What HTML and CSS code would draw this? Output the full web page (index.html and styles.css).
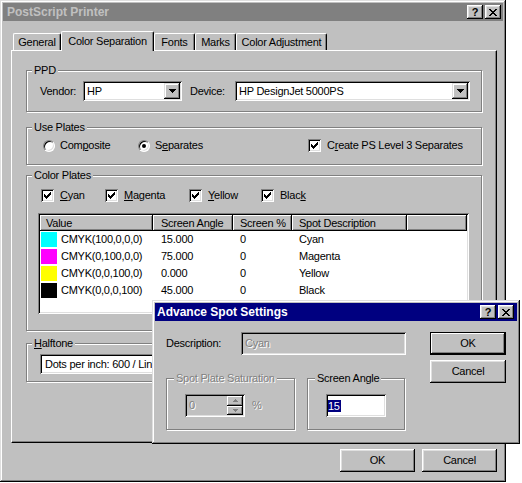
FILE: index.html
```html
<!DOCTYPE html>
<html lang="en">
<head>
<meta charset="utf-8">
<title>PostScript Printer</title>
<link rel="stylesheet" href="styles.css">
</head>
<body>
<div class="desktop">
  <div class="window">
    <div class="titlebar inactive">
      <span class="title">PostScript Printer</span>
      <div class="capbtns">
        <span class="capbtn">?</span>
        <span class="capbtn"><svg class="px" width="8" height="7" viewBox="0 0 8 7"><path d="M0 0h2v1H0zM6 0h2v1H6zM1 1h2v1H1zM5 1h2v1H5zM2 2h4v1H2zM3 3h2v1H3zM2 4h4v1H2zM1 5h2v1H1zM5 5h2v1H5zM0 6h2v1H0zM6 6h2v1H6z"/></svg></span>
      </div>
    </div>

    <div class="tabs">
      <div class="tab w-general">General</div>
      <div class="tab sel w-colorsep">Color Separation</div>
      <div class="tab w-fonts">Fonts</div>
      <div class="tab w-marks">Marks</div>
      <div class="tab w-coladj">Color Adjustment</div>
    </div>

    <div class="page">
      <fieldset class="group g-ppd">
        <legend>PPD</legend>
        <div class="ppd-row">
          <span class="vendor-lbl">Vendor:</span>
          <div class="field combo vendor-combo">
            <span class="combo-text">HP</span>
            <span class="dropbtn"><svg class="px" width="7" height="4" viewBox="0 0 7 4"><path d="M0 0h7v1H0zM1 1h5v1H1zM2 2h3v1H2zM3 3h1v1H3z"/></svg></span>
          </div>
          <span class="device-lbl">Device:</span>
          <div class="field combo device-combo">
            <span class="combo-text">HP DesignJet 5000PS</span>
            <span class="dropbtn"><svg class="px" width="7" height="4" viewBox="0 0 7 4"><path d="M0 0h7v1H0zM1 1h5v1H1zM2 2h3v1H2zM3 3h1v1H3z"/></svg></span>
          </div>
        </div>
      </fieldset>

      <fieldset class="group g-plates">
        <legend>Use Plates</legend>
        <div class="plates-row">
          <span class="opt radio-opt w-composite"><span class="radio"></span><span class="txt">Com<u>p</u>osite</span></span>
          <span class="opt radio-opt w-separates"><span class="radio"><span class="dot"></span></span><span class="txt">S<u>e</u>parates</span></span>
          <span class="opt"><span class="check"><svg class="px" width="7" height="7" viewBox="0 0 7 7"><path d="M6 0h1v1H6zM5 1h2v1H5zM0 2h1v1H0zM4 2h3v1H4zM0 3h2v1H0zM3 3h3v1H3zM0 4h5v1H0zM1 5h3v1H1zM2 6h1v1H2z"/></svg></span><span class="txt">C<u>r</u>eate PS Level 3 Separates</span></span>
        </div>
      </fieldset>

      <fieldset class="group g-colors">
        <legend>Color Plates</legend>
        <div class="cp-inner">
          <div class="cp-checks">
            <span class="opt w-cyan"><span class="check"><svg class="px" width="7" height="7" viewBox="0 0 7 7"><path d="M6 0h1v1H6zM5 1h2v1H5zM0 2h1v1H0zM4 2h3v1H4zM0 3h2v1H0zM3 3h3v1H3zM0 4h5v1H0zM1 5h3v1H1zM2 6h1v1H2z"/></svg></span><span class="txt"><u>C</u>yan</span></span>
            <span class="opt w-magenta"><span class="check"><svg class="px" width="7" height="7" viewBox="0 0 7 7"><path d="M6 0h1v1H6zM5 1h2v1H5zM0 2h1v1H0zM4 2h3v1H4zM0 3h2v1H0zM3 3h3v1H3zM0 4h5v1H0zM1 5h3v1H1zM2 6h1v1H2z"/></svg></span><span class="txt"><u>M</u>agenta</span></span>
            <span class="opt w-yellow"><span class="check"><svg class="px" width="7" height="7" viewBox="0 0 7 7"><path d="M6 0h1v1H6zM5 1h2v1H5zM0 2h1v1H0zM4 2h3v1H4zM0 3h2v1H0zM3 3h3v1H3zM0 4h5v1H0zM1 5h3v1H1zM2 6h1v1H2z"/></svg></span><span class="txt"><u>Y</u>ellow</span></span>
            <span class="opt"><span class="check"><svg class="px" width="7" height="7" viewBox="0 0 7 7"><path d="M6 0h1v1H6zM5 1h2v1H5zM0 2h1v1H0zM4 2h3v1H4zM0 3h2v1H0zM3 3h3v1H3zM0 4h5v1H0zM1 5h3v1H1zM2 6h1v1H2z"/></svg></span><span class="txt">Blac<u>k</u></span></span>
          </div>
          <div class="field list">
            <div class="lv-head">
              <span class="hcell c-value">Value</span>
              <span class="hcell c-angle">Screen Angle</span>
              <span class="hcell c-pct">Screen %</span>
              <span class="hcell c-desc">Spot Description</span>
              <span class="hcell c-fill"></span>
            </div>
            <div class="lv-row">
              <span class="cell c-value"><span class="swatch sw-cyan"></span><span class="txt">CMYK(100,0,0,0)</span></span>
              <span class="cell c-angle">15.000</span>
              <span class="cell c-pct">0</span>
              <span class="cell c-desc">Cyan</span>
            </div>
            <div class="lv-row">
              <span class="cell c-value"><span class="swatch sw-magenta"></span><span class="txt">CMYK(0,100,0,0)</span></span>
              <span class="cell c-angle">75.000</span>
              <span class="cell c-pct">0</span>
              <span class="cell c-desc">Magenta</span>
            </div>
            <div class="lv-row">
              <span class="cell c-value"><span class="swatch sw-yellow"></span><span class="txt">CMYK(0,0,100,0)</span></span>
              <span class="cell c-angle">0.000</span>
              <span class="cell c-pct">0</span>
              <span class="cell c-desc">Yellow</span>
            </div>
            <div class="lv-row">
              <span class="cell c-value"><span class="swatch sw-black"></span><span class="txt">CMYK(0,0,0,100)</span></span>
              <span class="cell c-angle">45.000</span>
              <span class="cell c-pct">0</span>
              <span class="cell c-desc">Black</span>
            </div>
          </div>
        </div>
      </fieldset>

      <fieldset class="group g-halftone">
        <legend><u>H</u>alftone</legend>
        <div class="ht-inner">
          <div class="field ht-field">Dots per inch: 600 / Lines per inch: 85</div>
        </div>
      </fieldset>
    </div>

    <div class="buttons">
      <div class="btn">OK</div>
      <div class="btn">Cancel</div>
    </div>
  </div>

  <div class="dialog">
    <div class="titlebar active">
      <span class="title">Advance Spot Settings</span>
      <div class="capbtns">
        <span class="capbtn">?</span>
        <span class="capbtn"><svg class="px" width="8" height="7" viewBox="0 0 8 7"><path d="M0 0h2v1H0zM6 0h2v1H6zM1 1h2v1H1zM5 1h2v1H5zM2 2h4v1H2zM3 3h2v1H3zM2 4h4v1H2zM1 5h2v1H1zM5 5h2v1H5zM0 6h2v1H0zM6 6h2v1H6z"/></svg></span>
      </div>
    </div>
    <div class="dlg-body">
      <div class="dlg-main">
        <div class="desc-row">
          <span class="desc-lbl">Description:</span>
          <div class="field disabled desc-field"><span class="dis-text">Cyan</span></div>
        </div>
        <div class="dlg-groups">
          <fieldset class="group dlg-group g-sat">
            <legend><span class="dis-text">Spot Plate Saturation</span></legend>
            <div class="sat-inner">
              <div class="field disabled spin">
                <span class="dis-text spin-val">0</span>
                <span class="spin-btns">
                  <span class="spin-btn"><svg class="px dis-arrow" width="5" height="3" viewBox="0 0 5 3"><path d="M2 0h1v1H2zM1 1h3v1H1zM0 2h5v1H0z"/></svg></span>
                  <span class="spin-btn"><svg class="px dis-arrow" width="5" height="3" viewBox="0 0 5 3"><path d="M0 0h5v1H0zM1 1h3v1H1zM2 2h1v1H2z"/></svg></span>
                </span>
              </div>
              <span class="dis-text pct">%</span>
            </div>
          </fieldset>
          <fieldset class="group dlg-group g-angle">
            <legend>Screen Angle</legend>
            <div class="angle-inner">
              <div class="field angle-field"><span class="sel-text">15</span></div>
            </div>
          </fieldset>
        </div>
      </div>
      <div class="dlg-btns">
        <div class="btn default">OK</div>
        <div class="btn">Cancel</div>
      </div>
    </div>
  </div>
</div>
</body>
</html>
```

FILE: styles.css
```css
* { box-sizing: border-box; }

html, body {
  margin: 0;
  padding: 0;
  background: #fff;
}

body {
  font-family: "Liberation Sans", Arial, sans-serif;
  font-size: 11px;
  line-height: 13px;
  letter-spacing: -0.25px;
  color: #000;
}

.desktop {
  position: relative;
  width: 522px;
  height: 483px;
  overflow: hidden;
}

.px {
  display: block;
  fill: #000;
  shape-rendering: crispEdges;
}

.txt { white-space: nowrap; }

/* ---------- window frame ---------- */
.window {
  width: 506px;
  height: 482px;
  padding: 3px;
  background: #c0c0c0;
  display: flex;
  flex-direction: column;
  box-shadow: inset -1px -1px 0 #000, inset 1px 1px 0 #dfdfdf,
              inset -2px -2px 0 #808080, inset 2px 2px 0 #fff;
}

.titlebar {
  flex: none;
  height: 18px;
  display: flex;
  align-items: center;
  justify-content: space-between;
  padding: 0 2px 0 4px;
  font-size: 12px;
  font-weight: bold;
  letter-spacing: 0;
  white-space: nowrap;
}
.titlebar.inactive { background: #808080; color: #c0c0c0; }
.titlebar.active { background: #000080; color: #fff; padding-left: 2px; }

.capbtns { display: flex; gap: 2px; }
.capbtn {
  width: 16px;
  height: 14px;
  background: #c0c0c0;
  color: #000;
  display: flex;
  align-items: center;
  justify-content: center;
  font-size: 11px;
  font-weight: bold;
  line-height: 14px;
  box-shadow: inset -1px -1px 0 #000, inset 1px 1px 0 #fff,
              inset -2px -2px 0 #808080, inset 2px 2px 0 #dfdfdf;
}

/* ---------- tabs ---------- */
.tabs {
  flex: none;
  display: flex;
  align-items: flex-end;
  height: 19px;
  margin: 10px 0 0 10px;
}
.tab {
  height: 17px;
  padding-top: 2px;
  text-align: center;
  white-space: nowrap;
  border-top: 1px solid #fff;
  border-left: 1px solid #fff;
  border-right: 1px solid #000;
  border-radius: 2px 2px 0 0;
  box-shadow: inset -1px 0 0 #808080;
}
.tab.sel {
  height: 20px;
  padding-top: 3px;
  margin-bottom: -1px;
  position: relative;
  z-index: 1;
  background: #c0c0c0;
}
.w-general { width: 48px; }
.w-colorsep { width: 93px; }
.w-fonts { width: 41px; }
.w-marks { width: 41px; }
.w-coladj { width: 91px; }

.page {
  flex: none;
  height: 393px;
  margin: 0 6px 0 8px;
  padding: 13px 14px 0;
  border: 1px solid;
  border-color: #fff #000 #000 #fff;
  box-shadow: inset -1px -1px 0 #808080;
  display: flex;
  flex-direction: column;
}

/* ---------- group boxes ---------- */
.group {
  flex: none;
  margin: 0;
  padding: 0;
  min-width: 0;
  border: 1px solid #808080;
  box-shadow: 1px 1px 0 #fff, inset 1px 1px 0 #fff;
}
.group > legend {
  margin-left: 5px;
  padding: 0 2px;
  height: 13px;
  line-height: 13px;
  background: #c0c0c0;
  white-space: nowrap;
}
.dlg-group > legend { margin-left: 7px; }

.g-plates { margin-top: 9px; }
.g-colors { margin-top: 4px; }
.g-halftone { margin-top: 6px; }

/* ---------- fields ---------- */
.field {
  background: #fff;
  box-shadow: inset 1px 1px 0 #808080, inset -1px -1px 0 #fff,
              inset 2px 2px 0 #000, inset -2px -2px 0 #dfdfdf;
}
.field.disabled { background: #c0c0c0; }

.dis-text {
  color: #808080;
  text-shadow: 1px 1px 0 #fff;
}

/* PPD */
.ppd-row {
  display: flex;
  align-items: center;
  padding: 4px 0 10px 13px;
}
.vendor-lbl { width: 43px; }
.device-lbl { width: 53px; padding-left: 8px; }
.combo {
  height: 20px;
  padding: 2px;
  display: flex;
  align-items: center;
}
.vendor-combo { width: 99px; }
.device-combo { width: 235px; }
.combo-text { flex: 1; padding-left: 2px; white-space: nowrap; }
.dropbtn {
  width: 16px;
  height: 16px;
  background: #c0c0c0;
  display: flex;
  align-items: center;
  justify-content: center;
  box-shadow: inset -1px -1px 0 #000, inset 1px 1px 0 #dfdfdf,
              inset -2px -2px 0 #808080, inset 2px 2px 0 #fff;
}

/* options */
.opt {
  display: flex;
  align-items: center;
  white-space: nowrap;
  gap: 6px;
}
.radio-opt { gap: 5px; }
.plates-row {
  display: flex;
  align-items: center;
  height: 13px;
  box-sizing: content-box;
  padding: 5px 0 12px 16px;
}
.w-composite { width: 95px; }
.w-separates { width: 170px; }

.check {
  flex: none;
  width: 13px;
  height: 13px;
  background: #fff;
  display: flex;
  align-items: center;
  justify-content: center;
  box-shadow: inset 1px 1px 0 #808080, inset -1px -1px 0 #fff,
              inset 2px 2px 0 #000, inset -2px -2px 0 #dfdfdf;
}
.radio {
  flex: none;
  width: 12px;
  height: 12px;
  border-radius: 50%;
  background: #fff;
  border: 1px solid;
  border-color: #808080 #fff #fff #808080;
  box-shadow: inset 1px 1px 0 #000, inset -1px -1px 0 #dfdfdf;
  display: flex;
  align-items: center;
  justify-content: center;
}
.dot {
  width: 4px;
  height: 4px;
  border-radius: 50%;
  background: #000;
}

/* color plates */
.cp-inner { padding: 7px 0 16px 11px; }
.cp-checks {
  display: flex;
  align-items: center;
  height: 13px;
  margin-left: 3px;
}
.w-cyan { width: 64px; }
.w-magenta { width: 84px; }
.w-yellow { width: 72px; }

.list {
  margin-top: 11px;
  width: 431px;
  height: 101px;
  padding: 2px;
  overflow: hidden;
}
.lv-head {
  display: flex;
  height: 16px;
}
.hcell {
  height: 16px;
  line-height: 16px;
  padding-left: 7px;
  white-space: nowrap;
  background: #c0c0c0;
  box-shadow: inset -1px -1px 0 #000, inset 1px 1px 0 #fff,
              inset -2px -2px 0 #808080;
}
.c-value { width: 113px; }
.c-angle { width: 80px; padding-left: 8px; }
.c-pct { width: 59px; }
.c-desc { width: 115px; }
.c-fill { flex: 1; }
.hcell.c-value { padding-left: 6px; }

.lv-row {
  display: flex;
  align-items: center;
  height: 17px;
}
.cell {
  padding-left: 7px;
  white-space: nowrap;
}
.cell.c-angle { padding-left: 8px; }
.cell.c-value {
  display: flex;
  align-items: center;
  padding-left: 1px;
  gap: 4px;
}
.swatch {
  width: 16px;
  height: 15px;
  flex: none;
}
.sw-cyan { background: #00ffff; }
.sw-magenta { background: #ff00ff; }
.sw-yellow { background: #ffff00; }
.sw-black { background: #000; }

/* halftone */
.ht-inner { padding: 4px 0 7px 13px; }
.ht-field {
  width: 428px;
  height: 20px;
  padding-left: 5px;
  display: flex;
  align-items: center;
  white-space: nowrap;
  overflow: hidden;
}

/* ---------- buttons ---------- */
.buttons {
  flex: none;
  display: flex;
  justify-content: flex-end;
  gap: 7px;
  margin: 6px 6px 0 0;
}
.btn {
  width: 75px;
  height: 23px;
  display: flex;
  align-items: center;
  justify-content: center;
  background: #c0c0c0;
  box-shadow: inset -1px -1px 0 #000, inset 1px 1px 0 #fff,
              inset -2px -2px 0 #808080, inset 2px 2px 0 #dfdfdf;
}
.btn.default {
  border: 1px solid #000;
  box-shadow: inset -1px -1px 0 #000, inset 1px 1px 0 #fff,
              inset -2px -2px 0 #808080;
}

/* ---------- dialog ---------- */
.dialog {
  position: absolute;
  left: 152px;
  top: 300px;
  width: 368px;
  height: 144px;
  padding: 3px;
  background: #c0c0c0;
  display: flex;
  flex-direction: column;
  box-shadow: inset -1px -1px 0 #000, inset 1px 1px 0 #dfdfdf,
              inset -2px -2px 0 #808080, inset 2px 2px 0 #fff;
}
.dialog .titlebar { padding-right: 3px; }

.dlg-body {
  display: flex;
  padding: 11px 0 0 11px;
}
.dlg-main {
  width: 240px;
  display: flex;
  flex-direction: column;
}
.desc-row {
  display: flex;
  align-items: center;
  height: 23px;
}
.desc-lbl { width: 75px; }
.desc-field {
  width: 165px;
  height: 23px;
  padding: 0 4px;
  display: flex;
  align-items: center;
}
.dlg-groups {
  display: flex;
  gap: 12px;
  margin-top: 17px;
}
.g-sat { width: 129px; }
.g-angle { width: 98px; }
.sat-inner, .angle-inner {
  display: flex;
  align-items: center;
  padding: 9px 0 12px 18px;
}
.spin {
  width: 60px;
  height: 23px;
  padding: 2px 2px 2px 4px;
  display: flex;
  align-items: center;
}
.spin-val { flex: 1; }
.spin-btns {
  width: 16px;
  height: 19px;
  display: flex;
  flex-direction: column;
}
.spin-btn {
  flex: 1;
  display: flex;
  align-items: center;
  justify-content: center;
  background: #c0c0c0;
  box-shadow: inset -1px -1px 0 #000, inset 1px 1px 0 #fff,
              inset -2px -2px 0 #808080;
}
.dis-arrow { fill: #808080; }
.pct { margin-left: 7px; }
.angle-field {
  width: 60px;
  height: 23px;
  padding: 0 2px;
  display: flex;
  align-items: center;
}
.sel-text {
  background: #000080;
  color: #fff;
  line-height: 12px;
  padding: 0 1px 0 0;
}
.dlg-btns {
  margin-left: 24px;
  display: flex;
  flex-direction: column;
  gap: 5px;
}
.dlg-btns .btn { width: 76px; }
```
